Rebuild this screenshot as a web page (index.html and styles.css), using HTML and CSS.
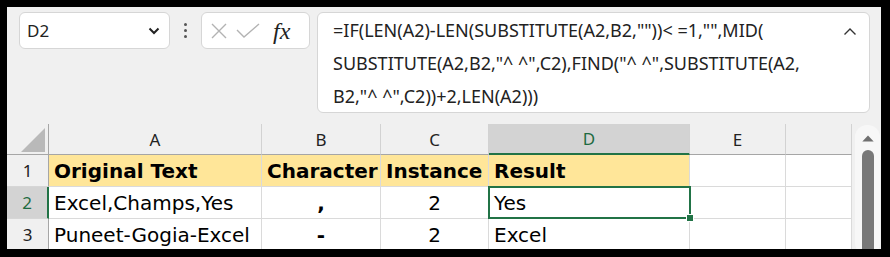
FILE: index.html
```html
<!DOCTYPE html>
<html lang="en">
<head>
    <meta charset="UTF-8">
    <title>Sheet</title>
    <link rel="stylesheet" href="styles.css">
</head>
<body>
    <div class="frame">
        <div class="toolbar">
            <div class="namebox">
                <span>D2</span>
                <svg width="12" height="8" viewBox="0 0 12 8"><path d="M1.5 1.5 L6 6 L10.5 1.5" fill="none" stroke="#222" stroke-width="2"/></svg>
            </div>
            <div class="dots"><i></i><i></i><i></i></div>
            <div class="fxbox">
                <svg width="16" height="16" viewBox="0 0 16 16"><path d="M1 1 L15 15 M15 1 L1 15" stroke="#b3b3b3" stroke-width="1.4"/></svg>
                <svg width="24" height="16" viewBox="0 0 24 16"><path d="M1 7 L8 14 L23 1" fill="none" stroke="#b3b3b3" stroke-width="1.4"/></svg>
                <span class="fx">fx</span>
            </div>
            <div class="formula">
                <div class="lines">
                    <div class="line">=IF(LEN(A2)-LEN(SUBSTITUTE(A2,B2,""))&lt; =1,"",MID(</div>
                    <div class="line">SUBSTITUTE(A2,B2,"^ ^",C2),FIND("^ ^",SUBSTITUTE(A2,</div>
                    <div class="line">B2,"^ ^",C2))+2,LEN(A2)))</div>
                </div>
                <svg class="caret" width="14" height="9" viewBox="0 0 14 9"><path d="M1.5 7.5 L7 2 L12.5 7.5" fill="none" stroke="#333" stroke-width="1.4"/></svg>
            </div>
        </div>

        <div class="sheet">
            <div class="grid">
                <div class="corner"><svg width="24" height="24" viewBox="0 0 24 24"><path d="M24 0 L24 24 L0 24 Z" fill="#b9b9b9"/></svg></div>
                <div class="colhead">A</div>
                <div class="colhead">B</div>
                <div class="colhead">C</div>
                <div class="colhead active">D</div>
                <div class="colhead">E</div>
                <div class="colhead"></div>

                <div class="rowhead">1</div>
                <div class="cell head">Original Text</div>
                <div class="cell head">Character</div>
                <div class="cell head">Instance</div>
                <div class="cell head">Result</div>
                <div class="cell"></div>
                <div class="cell"></div>

                <div class="rowhead active">2</div>
                <div class="cell">Excel,Champs,Yes</div>
                <div class="cell center bold">,</div>
                <div class="cell center">2</div>
                <div class="cell selected">Yes</div>
                <div class="cell"></div>
                <div class="cell"></div>

                <div class="rowhead">3</div>
                <div class="cell">Puneet-Gogia-Excel</div>
                <div class="cell center bold">-</div>
                <div class="cell center">2</div>
                <div class="cell">Excel</div>
                <div class="cell"></div>
                <div class="cell"></div>
            </div>
            <div class="scrollbar">
                <div class="track">
                    <svg width="14" height="8" viewBox="0 0 14 8"><path d="M7 0.5 L13.5 7.5 L0.5 7.5 Z" fill="#707070"/></svg>
                    <div class="thumb"></div>
                </div>
            </div>
        </div>
    </div>
</body>
</html>
```

FILE: styles.css
```css
/* Reset */
* {
    margin: 0;
    padding: 0;
    box-sizing: border-box;
}

body {
    background: #000;
    width: 890px;
    height: 257px;
    overflow: hidden;
}

/* Window area inside the black frame */
.frame {
    margin: 7px 9px 0 7px;
    height: 242px;
    background: #f0f0f0;
    overflow: hidden;
    font-family: 'Noto Sans', sans-serif;
    color: #222;
}

/* Formula bar */
.toolbar {
    display: flex;
    align-items: flex-start;
    padding: 5px 0 0 12px;
    height: 117px;
}

.namebox {
    width: 151px;
    height: 37px;
    background: #fff;
    border: 1px solid #d6d6d6;
    border-radius: 6px;
    display: flex;
    align-items: center;
    justify-content: space-between;
    padding: 0 9px 0 7px;
    font-size: 17px;
}

.dots {
    width: 31px;
    height: 37px;
    display: flex;
    flex-direction: column;
    align-items: center;
    justify-content: center;
    gap: 3px;
}

.dots i {
    width: 3px;
    height: 3px;
    background: #555;
    border-radius: 50%;
}

.fxbox {
    width: 109px;
    height: 37px;
    background: #fff;
    border: 1px solid #d6d6d6;
    border-radius: 6px;
    display: flex;
    align-items: center;
    padding: 0 6px 0 9px;
    gap: 9px;
}

.fx {
    font-family: 'Liberation Serif', serif;
    font-style: italic;
    font-size: 24px;
    color: #222;
    margin-left: 4px;
    line-height: 1;
}

.formula {
    margin-left: 7px;
    width: 553px;
    height: 101px;
    background: #fff;
    border: 1px solid #d6d6d6;
    border-radius: 6px;
    display: flex;
    justify-content: space-between;
    padding: 1px 12px 0 15px;
}

.lines {
    font-size: 18px;
    line-height: 33px;
    color: #222;
}

.line {
    white-space: pre;
}

.caret {
    margin-top: 13px;
}

/* Sheet */
.sheet {
    display: flex;
}

.grid {
    display: grid;
    grid-template-columns: 42px 213px 119px 108px 201px 96px 66px;
    grid-template-rows: 31px 32px 32px 32px;
    background: #fff;
    font-family: 'DejaVu Sans', sans-serif;
}

.corner {
    background: #f0f0f0;
    border-right: 1px solid #a6a6a6;
    border-bottom: 1px solid #a6a6a6;
    display: flex;
    align-items: flex-end;
    justify-content: flex-end;
    padding: 0 3px 2px 0;
}

.colhead {
    background: #f0f0f0;
    border-right: 1px solid #d2d2d2;
    border-bottom: 1px solid #a6a6a6;
    font-family: 'Noto Sans', sans-serif;
    font-size: 17px;
    color: #222;
    display: flex;
    align-items: center;
    justify-content: center;
}

.colhead.active {
    background: #d3d3d3;
    color: #1e6b41;
    border-bottom: 2px solid #217346;
}

.rowhead {
    background: #f0f0f0;
    border-right: 1px solid #a6a6a6;
    border-bottom: 1px solid #d6d6d6;
    font-family: 'Noto Sans', sans-serif;
    font-size: 17px;
    color: #222;
    display: flex;
    align-items: center;
    justify-content: center;
}

.rowhead.active {
    background: #d3d3d3;
    color: #1e6b41;
    border-right: 2px solid #217346;
}

.cell {
    border-right: 1px solid #dadada;
    border-bottom: 1px solid #dadada;
    font-size: 20px;
    color: #000;
    padding: 0 5px;
    display: flex;
    align-items: center;
    white-space: nowrap;
    overflow: hidden;
}

.cell.head {
    background: #ffe699;
    font-weight: bold;
    padding: 0 5px;
}

.cell.center {
    justify-content: center;
}

.cell.bold {
    font-weight: bold;
}

/* Active cell outline with fill handle */
.cell.selected {
    position: relative;
    overflow: visible;
}

.cell.selected::before {
    content: '';
    position: absolute;
    left: -1px;
    top: -1px;
    right: -2px;
    bottom: -1px;
    border: 2px solid #217346;
}

.cell.selected::after {
    content: '';
    position: absolute;
    right: -5px;
    bottom: -4px;
    width: 6px;
    height: 6px;
    background: #217346;
    border: 1px solid #fff;
}

/* Vertical scrollbar */
.scrollbar {
    width: 29px;
    padding: 1px 1px 0 3px;
    background: #f0f0f0;
}

.track {
    height: 130px;
    background: #f7f7f7;
    border-radius: 12px;
    display: flex;
    flex-direction: column;
    align-items: center;
}

.track svg {
    margin-top: 10px;
}

.thumb {
    margin-top: 8px;
    width: 12px;
    height: 120px;
    background: #787878;
    border-radius: 6px;
}
```
